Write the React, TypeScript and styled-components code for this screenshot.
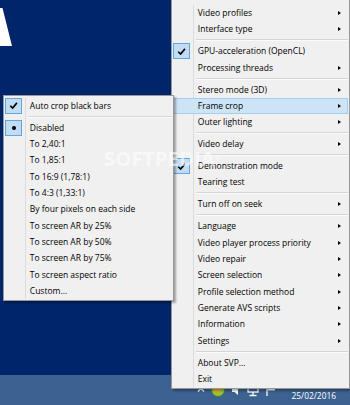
import React from "react";
import styled, { createGlobalStyle, css } from "styled-components";

const GlobalStyle = createGlobalStyle`
  html, body { margin: 0; padding: 0; }
  body {
    width: 350px;
    height: 405px;
    overflow: hidden;
    background: #00256a;
    font-family: "Open Sans", "Noto Sans", sans-serif;
  }
  #root { width: 350px; height: 405px; }
`;

const Desktop = styled.div`
  position: relative;
  width: 350px;
  height: 405px;
  display: flex;
  flex-direction: column;
  background: #00256a;
  overflow: hidden;
`;

const Wallpaper = styled.div`
  flex: 1;
`;

const LogoShape = styled.svg`
  display: block;
  margin-top: 8px;
`;

const Taskbar = styled.div`
  height: 30px;
  flex: none;
  background: #3b6290;
  display: flex;
  align-items: center;
  justify-content: flex-end;
  padding-right: 14px;
  gap: 13px;
`;

const Tray = styled.div`
  display: flex;
  align-items: center;
  gap: 1.5px;
`;

const TrayIcon = styled.svg`
  display: block;
  width: 16px;
  height: 16px;
`;

const Clock = styled.div`
  display: flex;
  flex-direction: column;
  align-items: center;
  color: #fff;
  font-family: "Open Sans", sans-serif;
  font-size: 8.4px;
  line-height: 12px;
`;

const Menu = styled.div<{ $left: number; $top: number; $width: number; $z: number; $padTop: number }>`
  position: absolute;
  left: ${(p) => p.$left}px;
  top: ${(p) => p.$top}px;
  width: ${(p) => p.$width}px;
  z-index: ${(p) => p.$z};
  box-sizing: border-box;
  background: #f0f0f0;
  border: 1px solid #979797;
  box-shadow: 2px 2px 2px rgba(0, 0, 0, 0.32);
  padding: ${(p) => p.$padTop}px 1px 1px 1px;
  font-family: "Open Sans", "Noto Sans", sans-serif;
  font-size: 8.5px;
  font-weight: 500;
  color: #000;
`;

const Item = styled.div<{ $active?: boolean }>`
  display: grid;
  grid-template-columns: 21px 1fr 18px;
  align-items: center;
  height: 16.35px;
  box-sizing: border-box;
  ${(p) =>
    p.$active &&
    css`
      background: #cde3f6;
      box-shadow: inset 0 0 0 1px #a6cdef;
    `}
`;

const Gutter = styled.div<{ $active?: boolean }>`
  height: 100%;
  box-sizing: border-box;
  display: flex;
  align-items: center;
  border-right: 1px solid ${(p) => (p.$active ? "transparent" : "#dcdcdc")};
`;

const Label = styled.span`
  padding-left: 3.8px;
  white-space: nowrap;
  line-height: 16px;
`;

const Arrow = styled.span`
  justify-self: center;
  width: 0;
  height: 0;
  border-top: 2.5px solid transparent;
  border-bottom: 2.5px solid transparent;
  border-left: 3px solid #000;
`;

const Separator = styled.div`
  display: grid;
  grid-template-columns: 21px 1fr;
  align-items: center;
  height: 5.6px;
`;

const SepGutter = styled.div`
  height: 100%;
  box-sizing: border-box;
  border-right: 1px solid #dcdcdc;
`;

const SepLine = styled.div`
  height: 1px;
  margin-left: 2px;
  background: #d5d5d5;
  border-bottom: 1px solid #fbfbfb;
`;

const CheckBox = styled.div`
  width: 17px;
  height: 16px;
  box-sizing: border-box;
  border: 1px solid #62a6df;
  background: #c1dcf3;
  display: flex;
  align-items: center;
  justify-content: center;
`;

const Bullet = styled.div`
  width: 4px;
  height: 4px;
  border-radius: 50%;
  background: #000;
`;

const Watermark = styled.div`
  position: absolute;
  left: 104px;
  top: 151px;
  z-index: 10;
  font-family: "Open Sans", sans-serif;
  font-weight: 700;
  font-size: 20px;
  line-height: 15px;
  letter-spacing: 0.3px;
  color: rgba(255, 255, 255, 0.6);
  pointer-events: none;
`;

const Reg = styled.sup`
  font-size: 7px;
  font-weight: 400;
  vertical-align: top;
`;

type Entry =
  | { kind: "sep" }
  | { kind: "item"; label: string; sub?: boolean; check?: "check" | "dot"; active?: boolean };

const sep: Entry = { kind: "sep" };
const it = (label: string, opts: Partial<{ sub: boolean; check: "check" | "dot"; active: boolean }> = {}): Entry => ({
  kind: "item",
  label,
  ...opts,
});

const mainEntries: Entry[] = [
  it("Video profiles", { sub: true }),
  it("Interface type", { sub: true }),
  sep,
  it("GPU-acceleration (OpenCL)", { check: "check" }),
  it("Processing threads", { sub: true }),
  sep,
  it("Stereo mode (3D)", { sub: true }),
  it("Frame crop", { sub: true, active: true }),
  it("Outer lighting", { sub: true }),
  sep,
  it("Video delay", { sub: true }),
  sep,
  it("Demonstration mode", { check: "check" }),
  it("Tearing test"),
  sep,
  it("Turn off on seek", { sub: true }),
  sep,
  it("Language", { sub: true }),
  it("Video player process priority", { sub: true }),
  it("Video repair", { sub: true }),
  it("Screen selection", { sub: true }),
  it("Profile selection method", { sub: true }),
  it("Generate AVS scripts", { sub: true }),
  it("Information", { sub: true }),
  it("Settings", { sub: true }),
  sep,
  it("About SVP..."),
  it("Exit"),
];

const subEntries: Entry[] = [
  it("Auto crop black bars", { check: "check" }),
  sep,
  it("Disabled", { check: "dot" }),
  it("To 2,40:1"),
  it("To 1,85:1"),
  it("To 16:9 (1,78:1)"),
  it("To 4:3 (1,33:1)"),
  it("By four pixels on each side"),
  it("To screen AR by 25%"),
  it("To screen AR by 50%"),
  it("To screen AR by 75%"),
  it("To screen aspect ratio"),
  it("Custom..."),
];

const CheckMark = () => (
  <svg width="9" height="9" viewBox="0 0 10 10">
    <path d="M1.4 5.3 L4 7.9 L8.8 2.1" fill="none" stroke="#000" strokeWidth="1.8" />
  </svg>
);

const MenuBody = ({ entries }: { entries: Entry[] }) => (
  <>
    {entries.map((e, i) =>
      e.kind === "sep" ? (
        <Separator key={i}>
          <SepGutter />
          <SepLine />
        </Separator>
      ) : (
        <Item key={i} $active={e.active}>
          <Gutter $active={e.active}>
            {e.check && <CheckBox>{e.check === "check" ? <CheckMark /> : <Bullet />}</CheckBox>}
          </Gutter>
          <Label>{e.label}</Label>
          {e.sub ? <Arrow /> : <span />}
        </Item>
      )
    )}
  </>
);

export default function App() {
  return (
    <>
      <GlobalStyle />
      <Desktop>
        <Wallpaper>
          <LogoShape width="13" height="38" viewBox="0 0 13 38">
            <polygon points="0,0 2.5,0 12,38 0,38" fill="#fff" />
          </LogoShape>
        </Wallpaper>
        <Taskbar>
          <Tray>
            <TrayIcon viewBox="0 0 16 16">
              <path d="M5 9.5 L8 6.5 L11 9.5" fill="none" stroke="#fff" strokeWidth="1.4" />
            </TrayIcon>
            <TrayIcon viewBox="0 0 16 16">
              <circle cx="8" cy="8" r="6.5" fill="#8cc63f" />
              <path d="M3 10 Q8 3 13 6 Q10 12 3 10 Z" fill="#f5a623" />
              <circle cx="8" cy="8" r="6.5" fill="none" stroke="#4a7a1c" strokeWidth="0.8" />
            </TrayIcon>
            <TrayIcon viewBox="0 0 16 16">
              <path d="M4 6 H6.5 L10 3 V13 L6.5 10 H4 Z" fill="#fff" />
            </TrayIcon>
            <TrayIcon viewBox="0 0 16 16">
              <rect x="3" y="3" width="10" height="7" fill="none" stroke="#fff" strokeWidth="1.3" />
              <path d="M8 10 V13 M4.5 13.5 H11.5" stroke="#fff" strokeWidth="1.3" />
            </TrayIcon>
            <TrayIcon viewBox="0 0 16 16">
              <path d="M4 2 V14" stroke="#fff" strokeWidth="1.3" />
              <path d="M4.6 3 H12 V8.5 H4.6 Z" fill="#fff" />
            </TrayIcon>
          </Tray>
          <Clock>
            <span>16:42</span>
            <span>25/02/2016</span>
          </Clock>
        </Taskbar>

        <Menu $left={171} $top={-1} $width={179} $z={1} $padTop={4.85}>
          <MenuBody entries={mainEntries} />
        </Menu>
        <Menu $left={3} $top={95} $width={171} $z={2} $padTop={1.5}>
          <MenuBody entries={subEntries} />
        </Menu>

        <Watermark>
          SOFTPEDIA<Reg>®</Reg>
        </Watermark>
      </Desktop>
    </>
  );
}
